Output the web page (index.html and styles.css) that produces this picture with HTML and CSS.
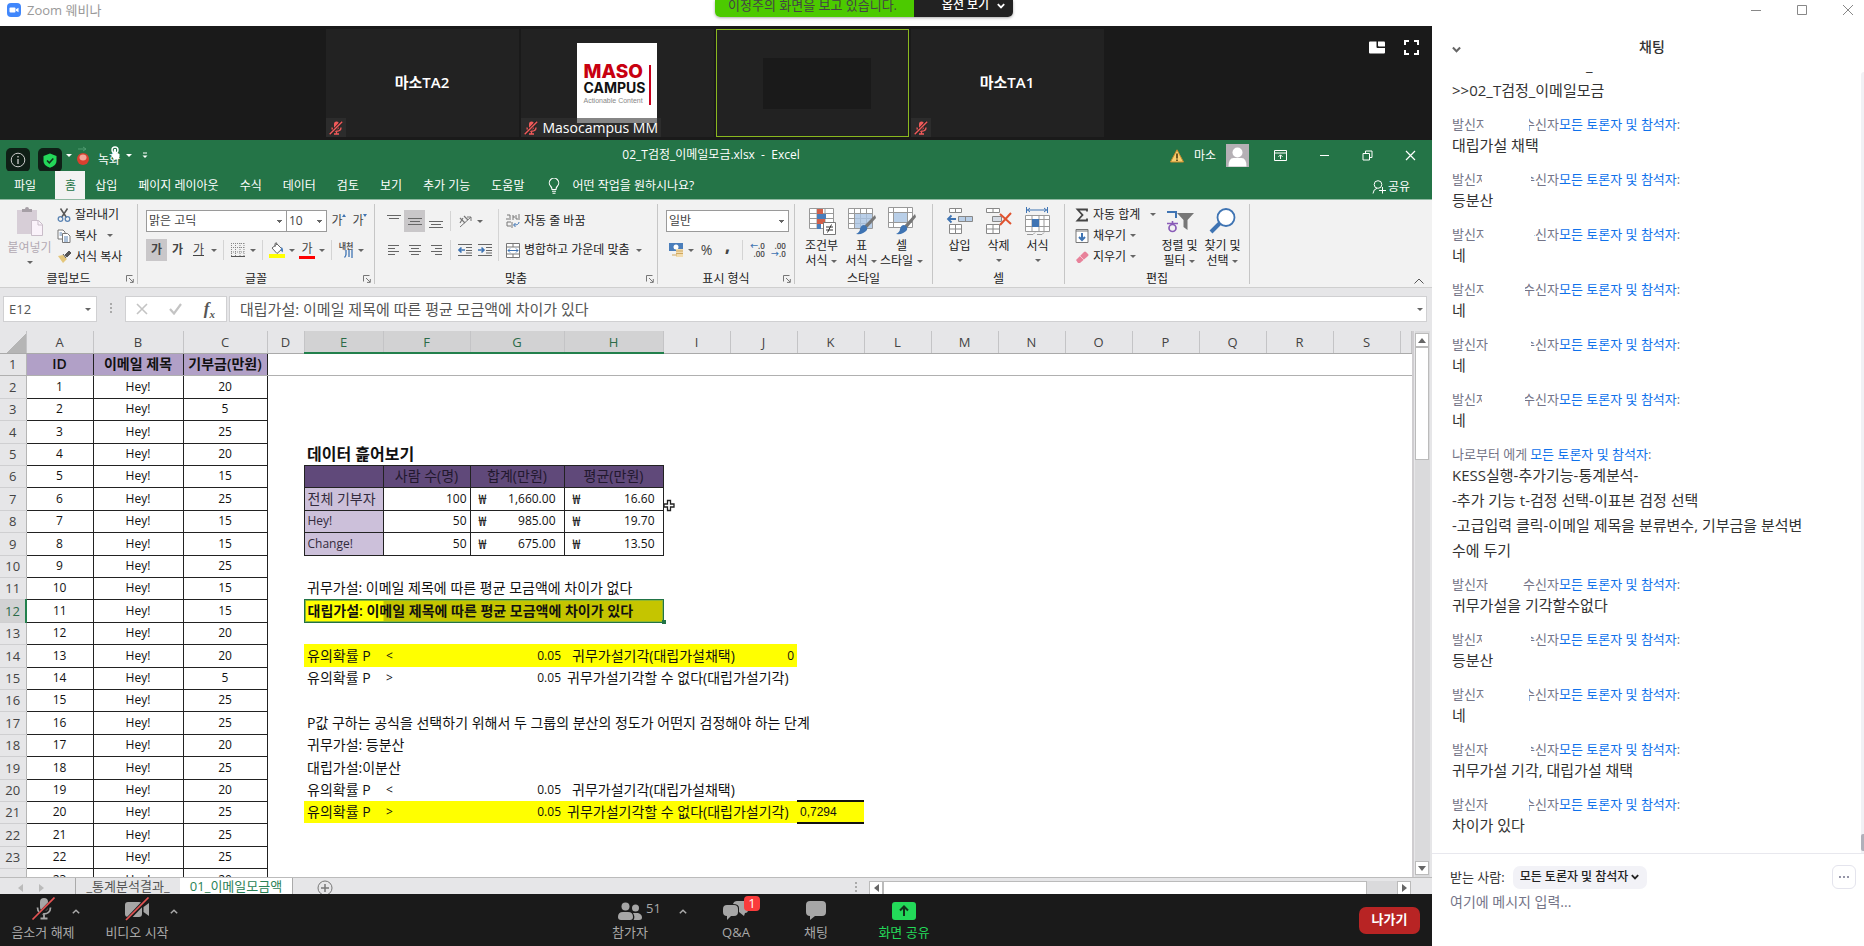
FILE: index.html
```html
<!DOCTYPE html>
<html lang="ko">
<head>
<meta charset="utf-8">
<title>Zoom 웨비나</title>
<link rel="stylesheet" href="styles.css">
</head>
<body>
<svg class="defs" aria-hidden="true">
  <symbol id="micoff" viewBox="0 0 14 14"><rect x="5" y="0.500" width="5" height="8" rx="2.500" fill="#f25a5a"/><path d="M3 6.500c0 5 9 5 9 0M7.500 10.500V13M5 13h5" stroke="#f25a5a" stroke-width="1.300" fill="none"/><path d="M1 13.500 13 .5" stroke="#222" stroke-width="3"/><path d="M.7 13.300 13.200.7" stroke="#f25a5a" stroke-width="1.400"/></symbol>
  <symbol id="launch" viewBox="0 0 8 8"><path d="M.5 6.500v-6h6M3 3l4 4M7.300 4v3.400H4" fill="none" stroke="#777"/></symbol>
  <symbol id="up" viewBox="0 0 8 5"><path d="M.8 4.200 4 1.200l3.200 3" fill="none" stroke="currentColor" stroke-width="1.500"/></symbol>
  <symbol id="down" viewBox="0 0 8 6"><path d="M.8 1.200 4 4.500l3.200-3.300" fill="none" stroke="currentColor" stroke-width="1.800"/></symbol>
</svg>

<header class="titlebar">
  <svg class="app" viewBox="0 0 14 14"><rect width="14" height="14" rx="4" fill="#4087fc"/><rect x="2.500" y="4.500" width="6" height="5" rx="1" fill="#fff"/><path d="m9 6.300 2.500-1.600v4.600L9 7.700z" fill="#fff"/></svg>
  <span class="app-name">Zoom 웨비나</span>
  <div class="banner"><span class="banner-msg">이정주의 화면을 보고 있습니다.</span><button class="banner-opt">옵션 보기 <svg width="8" height="6"><use href="#down"/></svg></button></div>
  <div class="win">
    <button aria-label="최소화"><svg width="12" height="12"><path d="M1 6.500h10" stroke="#888"/></svg></button>
    <button aria-label="최대화"><svg width="12" height="12"><path d="M1.500 1.500h9v9h-9z" stroke="#888" fill="none"/></svg></button>
    <button aria-label="닫기"><svg width="12" height="12"><path d="m1 1 10 10M11 1 1 11" stroke="#888"/></svg></button>
  </div>
</header>

<main class="main">
<section class="stage">
  <div class="gallery">
    <div class="tile"><b>마소TA2</b><span class="tag"><svg width="14" height="14"><use href="#micoff"/></svg></span></div>
    <div class="tile logo-tile">
      <div class="logo"><div class="logo-text"><b class="maso">MASO</b><b class="campus">CAMPUS</b><span class="action">Actionable Content</span></div></div>
      <span class="tag"><svg width="14" height="14"><use href="#micoff"/></svg>Masocampus MM</span>
    </div>
    <div class="tile speaking"><div class="mask"></div></div>
    <div class="tile"><b>마소TA1</b><span class="tag"><svg width="14" height="14"><use href="#micoff"/></svg></span></div>
    <div class="view-tools">
      <button aria-label="보기"><svg width="16" height="13"><path d="M0 1.500Q0 .5 1 .5h6.500V6q0 1 1 1H16v4.500q0 1-1 1H1q-1 0-1-1z" fill="#fff"/><path d="M9 .5h6q1 0 1 1v4H10q-1 0-1-1z" fill="#fff"/></svg></button>
      <button aria-label="전체 화면"><svg width="15" height="15"><path d="M1 5V1h4M10 1h4v4M14 10v4h-4M5 14H1v-4" fill="none" stroke="#fff" stroke-width="2"/></svg></button>
    </div>
  </div>

  <section class="excel">
    <div class="xl-title">
      <div class="qat">
        <button class="ov" aria-label="정보"><svg width="16" height="16"><circle cx="8" cy="8" r="6.800" fill="none" stroke="#ccc"/><path d="M8 7v5M8 4v1.500" stroke="#ccc" stroke-width="1.300"/></svg></button>
        <button class="ov" aria-label="보안"><svg width="14" height="15"><path d="M7 .5 13.500 3v5q0 4.500-6.500 6.800Q.5 12.500.5 8V3z" fill="#23d959"/><path d="m4 7.500 2.300 2.300L10.300 5.500" fill="none" stroke="#13301c" stroke-width="1.500"/></svg></button>
        <i class="caret light"></i>
        <svg class="ball" width="14" height="20"><path d="M2 3h8M7 1l3 2-3 2" stroke="#4f9a70" fill="none"/><circle cx="7" cy="13" r="6" fill="#d8402f"/><ellipse cx="7" cy="11.500" rx="3.500" ry="3" fill="#f3a79a"/></svg>
        <span class="rec">녹화<svg class="hand" width="10" height="14"><circle cx="5" cy="4" r="3" fill="none" stroke="#fff" stroke-width="1.400"/><path d="M4 3h2v4l3.500 1v3L8 13.500H4L1 9l2-.5z" fill="#fff"/></svg></span>
        <i class="caret light"></i>
        <svg class="custom" width="6" height="7"><path d="M1 1h4" stroke="#fff"/><path d="M.5 3.500h5L3 6z" fill="#fff"/></svg>
      </div>
      <h1>02_T검정_이메일모금.xlsx&nbsp; - &nbsp;Excel</h1>
      <div class="account">
        <svg width="14" height="14"><path d="M7 .8 13.500 13H.5z" fill="#f7cf6f" stroke="#c98b2c"/><path d="M7 4.500v5M7 10.500V12" stroke="#4b3a10" stroke-width="1.600"/></svg>
        <span class="user">마소</span>
        <svg class="avatar" width="23" height="23"><path fill="#b5b0b5" d="M0 0h23v23H0z"/><circle cx="11.500" cy="8.500" r="5" fill="#fff"/><path d="M2.500 22.500q0-8.500 5-8.500h8q5 0 5 8.500z" fill="#fff"/></svg>
        <button aria-label="리본 표시 옵션"><svg width="13" height="11"><path d="M.5.500h12v10H.5zM.5 3h12M6.500 9V5M4.500 6.800l2-2 2 2" fill="none" stroke="#fff"/></svg></button>
        <button aria-label="최소화"><svg width="11" height="11"><path d="M1 5.500h9" stroke="#fff"/></svg></button>
        <button aria-label="복원"><svg width="11" height="11"><path d="M1 3.500h6.500V10H1zM3.500 3V1H10v6.500H8" fill="none" stroke="#fff"/></svg></button>
        <button aria-label="닫기"><svg width="11" height="11"><path d="m1 1 9 9M10 1 1 10" stroke="#fff" stroke-width="1.200"/></svg></button>
      </div>
    </div>
    <nav class="tabs">
      <button class="file">파일</button><button class="on">홈</button><button>삽입</button><button>페이지 레이아웃</button><button>수식</button><button>데이터</button><button>검토</button><button>보기</button><button>추가 기능</button><button>도움말</button>
      <button class="tell"><svg width="12" height="16"><path d="M4 11.500Q4 9.500 2.500 8A4.700 4.700 0 1 1 9.500 8Q8 9.500 8 11.500zM4 13.300h4M4.500 15.300h3" fill="none" stroke="#fff" stroke-width="1.100"/></svg>어떤 작업을 원하시나요?</button>
      <button class="share"><svg width="14" height="14"><circle cx="6" cy="4.500" r="3.800" fill="none" stroke="#fff"/><path d="M1 13.500Q1.500 9 5 8.300M10.500 7v6.500M7 10.500h7" fill="none" stroke="#fff"/></svg>공유</button>
    </nav>

    <div class="ribbon">
      <div class="group g-clip">
        <div class="gbody">
          <button class="big off"><svg width="28" height="30"><path d="M1 3h20v24H1z" fill="#d7ced7"/><path d="M6 5V2h3q0-2 2-2t2 2h3v3z" fill="#a69fa6"/><path d="M15.500 13.500h7l4 4v11h-11z" fill="#faf2fa" stroke="#c9bdc9"/><path d="M22 13.500V18h4.500" fill="none" stroke="#c9bdc9"/></svg><span>붙여넣기</span><i class="caret"></i></button>
          <div class="stack">
            <button><svg width="14" height="14"><path d="m3.500.5 6 9M10.500.5l-6 9" stroke="#555" stroke-width="1.500"/><circle cx="3.500" cy="11" r="2.300" fill="none" stroke="#5a84b4" stroke-width="1.300"/><circle cx="10.500" cy="11" r="2.300" fill="none" stroke="#5a84b4" stroke-width="1.300"/></svg>잘라내기</button>
            <button><svg width="14" height="14"><path d="M1 1h5l2 2v7H1z" fill="#fff" stroke="#777"/><path d="M5.500 4.500h5l2.500 2.500v6.500H5.500z" fill="#fff" stroke="#777"/><path d="M7 8h4M7 10h4M7 12h4M2.500 4H5M2.500 6H5" stroke="#5a84b4"/></svg>복사<i class="caret"></i></button>
            <button><svg width="14" height="14"><path d="m1 6 5 7 4-4-4-4z" fill="#e4c67a"/><path d="m6 4 3 4M8 5l4-4 2 2-4 4z" stroke="#555" fill="#555"/></svg>서식 복사</button>
          </div>
        </div>
        <div class="glabel">클립보드<svg width="8" height="8"><use href="#launch"/></svg></div>
      </div>

      <div class="group g-font">
        <div class="gbody rows">
          <div class="row"><select class="combo name" aria-label="글꼴"><option>맑은 고딕</option></select><select class="combo size" aria-label="글꼴 크기"><option>10</option></select><button class="tool grow">가<svg width="4" height="3"><path d="M0 3h4L2 0z" fill="#3f74b3"/></svg></button><button class="tool shrink">가<svg width="4" height="3"><path d="M0 0h4L2 3z" fill="#3f74b3"/></svg></button></div>
          <div class="row"><button class="tool pressed"><b>가</b></button><button class="tool"><b><em>가</em></b></button><button class="tool"><u>가</u></button><i class="caret"></i><i class="sep"></i>
            <button class="ico"><svg width="14" height="14"><path d="M.5 0v13M4.500 0v13M9 0v13M13 0v13M0 .5h14M0 4.500h14M0 9h14" stroke="#888" stroke-dasharray="1 1"/><path d="M0 13.500h14" stroke="#555"/></svg></button><i class="caret"></i><i class="sep"></i>
            <button class="ico"><svg width="16" height="16"><path d="m3 6 5-4 5 5-5 4.500z" fill="#fff" stroke="#666"/><path d="M6 5V1.500q2-2 2 1" fill="none" stroke="#666"/><path d="M12.500 5q2.500 2 1 5.500L11.500 8z" fill="#4a7ebb"/><path d="M0 12h16v4H0z" fill="#ff0"/></svg></button><i class="caret"></i>
            <button class="ico"><span class="fc">가</span></button><i class="caret"></i><i class="sep"></i>
            <button class="ico"><span class="ruby">내천<svg width="9" height="8"><path d="M2 0v4Q2 6 .5 7.500M5 0v7M8 0v8" fill="none" stroke="#3f74b3" stroke-width="1.300"/></svg></span></button><i class="caret"></i></div>
        </div>
        <div class="glabel">글꼴<svg width="8" height="8"><use href="#launch"/></svg></div>
      </div>

      <div class="group g-align">
        <div class="gbody">
          <div class="rows">
            <div class="row"><button class="tool"><svg width="14" height="14"><path d="M0 1.500h14M2 4.500h10" stroke="#666"/></svg></button><button class="tool pressed"><svg width="14" height="14"><path d="M0 4.500h14M2 7.500h10M0 10.500h14" stroke="#666"/></svg></button><button class="tool"><svg width="14" height="14"><path d="M0 7.500h14M2 10.500h10M0 13.500h14" stroke="#666"/></svg></button><i class="sep"></i><button class="ico"><svg width="15" height="14"><path d="M2 13 13 3M13 3v4M13 3H9" stroke="#777" fill="none"/><path d="m2 4 5 5M2 9l3-5M6 2l4 4" stroke="#777" stroke-width="1.200"/></svg></button><i class="caret"></i></div>
            <div class="row"><button class="tool"><svg width="12" height="12"><path d="M0 1.500h11M0 4.500h7M0 7.500h11M0 10.500h7" stroke="#666"/></svg></button><button class="tool"><svg width="12" height="12"><path d="M0 1.500h12M2 4.500h8M0 7.500h12M2 10.500h8" stroke="#666"/></svg></button><button class="tool"><svg width="12" height="12"><path d="M1 1.500h11M5 4.500h7M1 7.500h11M5 10.500h7" stroke="#666"/></svg></button><i class="sep"></i><button class="ico"><svg width="14" height="12"><path d="M0 .5h14M8 3.500h6M8 6.500h6M0 11.500h14M8 9h6" stroke="#666"/><path d="M7 6H1M3.500 3.500 1 6l2.500 2.500" stroke="#3f74b3" stroke-width="1.600" fill="none"/></svg></button><button class="ico"><svg width="14" height="12"><path d="M0 .5h14M8 3.500h6M8 6.500h6M0 11.500h14M8 9h6" stroke="#666"/><path d="M0 6h6M3.500 3.500 6 6 3.500 8.500" stroke="#3f74b3" stroke-width="1.600" fill="none"/></svg></button></div>
          </div>
          <i class="vsep"></i>
          <div class="rows wide">
            <button class="line"><svg width="14" height="14"><path d="M1 1h3v3M0 5h5M7 1v5M7 3h2M10 1v4h2M13 0v6M1 8h4M1 8v4h4M6 8v6" fill="none" stroke="#777"/><path d="M13 8q0 3-5 3M9.500 9 7.500 11l2 2" fill="none" stroke="#3f74b3"/></svg>자동 줄 바꿈</button>
            <button class="line"><svg width="14" height="15"><path d="M.5.500h13v14H.5zM.5 4h13M.5 11h13M7 .5V4M7 11v3.500" fill="#fff" stroke="#777"/><path d="M2 7.500h10M4 5.500l-2 2 2 2M10 5.500l2 2-2 2" fill="none" stroke="#3f74b3"/></svg>병합하고 가운데 맞춤<i class="caret"></i></button>
          </div>
        </div>
        <div class="glabel">맞춤<svg width="8" height="8"><use href="#launch"/></svg></div>
      </div>

      <div class="group g-num">
        <div class="gbody rows">
          <div class="row"><select class="combo fmt" aria-label="표시 형식"><option>일반</option></select></div>
          <div class="row"><button class="ico"><svg width="16" height="16"><path d="M1 1h14v8H1z" fill="#4a7ebb"/><circle cx="8" cy="5" r="2.500" fill="#fff"/><path d="M8 7h7v8H8z" fill="#f2dcae"/><path d="M8 9h7M8 11.500h7M4 13h5" stroke="#d0a860"/></svg></button><i class="caret"></i><button class="tool pct">%</button><button class="tool comma">,</button><i class="sep"></i><button class="tool dec"><span><em>←</em>.0<br>.00</span></button><button class="tool dec"><span>.00<br><em>→</em>.0</span></button></div>
        </div>
        <div class="glabel">표시 형식<svg width="8" height="8"><use href="#launch"/></svg></div>
      </div>

      <div class="group g-style">
        <div class="gbody bigs">
          <button class="big"><svg width="28" height="28"><path d="M1.500 1.500h24v20h-24zM1.500 6.500h24M1.500 11.500h24M1.500 16.500h24M9 1.500v20M17 1.500v20" fill="#fff" stroke="#999"/><path d="M9 2h6v5H9zM9 12h8v5H9z" fill="#d2604a"/><path d="M9 7h9v5H9zM9 17h4v5H9z" fill="#4a7ebb"/><path d="M15.500 15.500h12v12h-12z" fill="#fff" stroke="#777"/><path d="M18 20h7M18 23h7M23.500 17.500l-4 8" stroke="#333"/></svg><span>조건부<br>서식 <i class="caret in"></i></span></button>
          <button class="big"><svg width="28" height="28"><path d="M.5 1.500h24v20H.5zM.5 6.500h24M.5 11.500h24M.5 16.500h24M6.500 1.500v20M12.500 1.500v20M18.500 1.500v20" fill="#fff" stroke="#999"/><path d="M7 7h17v14H7z" fill="#a9c3e2" opacity=".8"/><path d="m27 8 1 3-9 10-3-2z" fill="#777"/><path d="M16 18q4 1 3 5-4 5-11 4 4-2 4-5 1-4 4-4z" fill="#3f74b3"/></svg><span>표<br>서식 <i class="caret in"></i></span></button>
          <button class="big"><svg width="28" height="28"><path d="M.5.500h24v20H.5zM.5 5.500h24M.5 15.500h24M5.500.5v20M19.500.5v20" fill="#fff" stroke="#999"/><path d="M6 6h13v9H6z" fill="#b9cfe8"/><path d="m27 7 1 3-9 11-3-2z" fill="#777"/><path d="M16 18q4 1 3 5-4 5-11 4 4-2 4-5 1-4 4-4z" fill="#3f74b3"/></svg><span>셀<br>스타일 <i class="caret in"></i></span></button>
        </div>
        <div class="glabel">스타일</div>
      </div>

      <div class="group g-cell">
        <div class="gbody bigs">
          <button class="big"><svg width="28" height="28"><path d="M3.500 1.500h12v4h-12zM9.500 1.500v4M3.500 17.500h12v9h-12zM9.500 17.500v9M3.500 22h12" fill="#fff" stroke="#888"/><path d="M12.500 9.500h14v5h-14zM19.500 9.500v5" fill="#b9cfe8" stroke="#888"/><path d="M10 12H2M5.500 8.500 2 12l3.500 3.500" fill="none" stroke="#3f74b3" stroke-width="1.800"/></svg><span>삽입</span><i class="caret"></i></button>
          <button class="big"><svg width="28" height="28"><path d="M1.500 1.500h13v4h-13zM8 1.500v4M1.500 17.500h13v9h-13zM8 17.500v9M1.500 22h13" fill="#fff" stroke="#888"/><path d="M7.500 9.500h9v5h-9z" fill="#d5dbe4" stroke="#888"/><path d="m15 7 11 10M26 6 15 18" stroke="#e0532f" stroke-width="2"/></svg><span>삭제</span><i class="caret"></i></button>
          <button class="big"><svg width="28" height="28"><path d="M1.500 8.500h24v16h-24zM1.500 12.500h24M1.500 19.500h24M8 8.500v16M15 8.500v16M20 8.500v16M3 27.500h6l2-2M13 27.500h5l2-2" fill="#fff" stroke="#999"/><path d="M8 12h7v8H8z" fill="#3f74b3"/><path d="M3 3h20M6 1 3.500 3 6 5M20 1l2.500 2L20 5M2.500 0v6M23.500 0v6" fill="none" stroke="#3f74b3"/></svg><span>서식</span><i class="caret"></i></button>
        </div>
        <div class="glabel">셀</div>
      </div>

      <div class="group g-edit">
        <div class="gbody">
          <div class="stack">
            <button><svg width="14" height="14"><path d="M12 3.500V1.500H2.500L7.500 7l-5 5.500H12v-2" fill="none" stroke="#444" stroke-width="1.800"/></svg>자동 합계<i class="caret"></i></button>
            <button><svg width="14" height="14"><path d="M1 .5h12v13H1z" fill="#fff" stroke="#777"/><path d="M1 2h12" stroke="#777"/><path d="M7 4v7M4 8l3 3 3-3" fill="none" stroke="#3f74b3" stroke-width="2"/></svg>채우기<i class="caret near"></i></button>
            <button><svg width="14" height="14"><path d="m1 10 8-8q1-1 2 0l2 2q1 1 0 2l-8 7H3z" fill="#e8829a"/><path d="m5 6 4 4" stroke="#f6c3cf"/></svg>지우기<i class="caret near"></i></button>
          </div>
          <button class="big"><svg width="28" height="28"><path d="M1 5h9v6" fill="none" stroke="#3f74b3" stroke-width="2"/><path d="M1 16.500h11M6.500 14v2" stroke="#8a5cb8" stroke-width="1.600"/><circle cx="6.500" cy="21" r="3.500" fill="none" stroke="#8a5cb8" stroke-width="1.700"/><path d="M11 6h17l-6.500 7v10l-4-3v-7z" fill="#777"/></svg><span>정렬 및<br>필터 <i class="caret in"></i></span></button>
          <button class="big"><svg width="28" height="28"><circle cx="17" cy="10.500" r="8.500" fill="#fff" stroke="#3f74b3" stroke-width="1.800"/><path d="m11 16-9 9" stroke="#3f74b3" stroke-width="4"/></svg><span>찾기 및<br>선택 <i class="caret in"></i></span></button>
        </div>
        <div class="glabel">편집</div>
      </div>
      <button class="collapse" aria-label="리본 축소"><svg width="10" height="6"><path d="m.5 5.500 4.500-4.500 4.500 4.500" fill="none" stroke="#555"/></svg></button>
    </div>

    <div class="fbar">
      <label class="namebox"><input value="E12" aria-label="이름 상자"><i class="caret"></i></label>
      <i class="dots"></i>
      <div class="fbtns"><button aria-label="취소"><svg width="12" height="12"><path d="m1 1 10 10M11 1 1 11" stroke="#c4c4c4" stroke-width="1.600"/></svg></button><button aria-label="입력"><svg width="13" height="12"><path d="m1 6 4 4.500L12 1" fill="none" stroke="#c4c4c4" stroke-width="2.200"/></svg></button><button class="fx">f<sub>x</sub></button></div>
      <label class="formula"><input value="대립가설: 이메일 제목에 따른 평균 모금액에 차이가 있다" aria-label="수식"><i class="caret"></i></label>
    </div>

    <div class="grid-area">
      <div class="pane">
        <table class="sheet">
          <colgroup><col class="w26"><col class="w67"><col class="w90"><col class="w84"><col class="w37"><col class="w79"><col class="w87"><col class="w94"><col class="w99"><col span="11" class="w67"><col></colgroup>
          <thead><tr><th class="corner"></th><th>A</th><th>B</th><th>C</th><th>D</th><th class="sel">E</th><th class="sel">F</th><th class="sel">G</th><th class="sel">H</th><th>I</th><th>J</th><th>K</th><th>L</th><th>M</th><th>N</th><th>O</th><th>P</th><th>Q</th><th>R</th><th>S</th><th></th></tr></thead>
          <tbody>
            <tr class="frozen"><th>1</th><td class="h">ID</td><td class="h">이메일 제목</td><td class="h">기부금(만원)</td><td colspan="17"></td></tr>
            <tr><th>2</th><td class="d">1</td><td class="d">Hey!</td><td class="d">20</td><td colspan="17"></td></tr>
            <tr><th>3</th><td class="d">2</td><td class="d">Hey!</td><td class="d">5</td><td colspan="17"></td></tr>
            <tr><th>4</th><td class="d">3</td><td class="d">Hey!</td><td class="d">25</td><td colspan="17"></td></tr>
            <tr><th>5</th><td class="d">4</td><td class="d">Hey!</td><td class="d">20</td><td></td><td colspan="16" class="title">데이터 흝어보기</td></tr>
            <tr><th>6</th><td class="d">5</td><td class="d">Hey!</td><td class="d">15</td><td></td><td class="p"></td><td class="p">사람 수(명)</td><td class="p">합계(만원)</td><td class="p">평균(만원)</td><td colspan="12"></td></tr>
            <tr><th>7</th><td class="d">6</td><td class="d">Hey!</td><td class="d">25</td><td></td><td class="l">전체 기부자</td><td class="n">100</td><td class="m"><span class="won"><i>₩</i>1,660.00</span></td><td class="m"><span class="won"><i>₩</i>16.60</span><svg class="cross" width="12" height="13"><path d="M4.500 1.500h3v3.500h3.500v3H7.500v3.500h-3V8H1V5h3.500z" fill="#fff" stroke="#222" stroke-width="1.300"/></svg></td><td colspan="12"></td></tr>
            <tr><th>8</th><td class="d">7</td><td class="d">Hey!</td><td class="d">15</td><td></td><td class="l en">Hey!</td><td class="n">50</td><td class="m"><span class="won"><i>₩</i>985.00</span></td><td class="m"><span class="won"><i>₩</i>19.70</span></td><td colspan="12"></td></tr>
            <tr><th>9</th><td class="d">8</td><td class="d">Hey!</td><td class="d">15</td><td></td><td class="l en">Change!</td><td class="n">50</td><td class="m"><span class="won"><i>₩</i>675.00</span></td><td class="m"><span class="won"><i>₩</i>13.50</span></td><td colspan="12"></td></tr>
            <tr><th>10</th><td class="d">9</td><td class="d">Hey!</td><td class="d">25</td><td colspan="17"></td></tr>
            <tr><th>11</th><td class="d">10</td><td class="d">Hey!</td><td class="d">15</td><td></td><td colspan="16">귀무가설: 이메일 제목에 따른 평균 모금액에 차이가 없다</td></tr>
            <tr><th class="sel">12</th><td class="d">11</td><td class="d">Hey!</td><td class="d">15</td><td></td><td colspan="4" class="picked">대립가설: 이메일 제목에 따른 평균 모금액에 차이가 있다</td><td colspan="12"></td></tr>
            <tr><th>13</th><td class="d">12</td><td class="d">Hey!</td><td class="d">20</td><td colspan="17"></td></tr>
            <tr><th>14</th><td class="d">13</td><td class="d">Hey!</td><td class="d">20</td><td></td><td class="y">유의확률 P</td><td class="y en">&lt;</td><td class="y r">0.05</td><td colspan="3" class="y in"><span class="split">귀무가설기각(대립가설채택)<span>0</span></span></td><td colspan="10"></td></tr>
            <tr><th>15</th><td class="d">14</td><td class="d">Hey!</td><td class="d">5</td><td></td><td>유의확률 P</td><td class="en">&gt;</td><td class="r">0.05</td><td colspan="13">귀무가설기각할 수 없다(대립가설기각)</td></tr>
            <tr><th>16</th><td class="d">15</td><td class="d">Hey!</td><td class="d">25</td><td colspan="17"></td></tr>
            <tr><th>17</th><td class="d">16</td><td class="d">Hey!</td><td class="d">25</td><td></td><td colspan="16">P값 구하는 공식을 선택하기 위해서 두 그룹의 분산의 정도가 어떤지 검정해야 하는 단계</td></tr>
            <tr><th>18</th><td class="d">17</td><td class="d">Hey!</td><td class="d">20</td><td></td><td colspan="16">귀무가설: 등분산</td></tr>
            <tr><th>19</th><td class="d">18</td><td class="d">Hey!</td><td class="d">25</td><td></td><td colspan="16">대립가설:이분산</td></tr>
            <tr><th>20</th><td class="d">19</td><td class="d">Hey!</td><td class="d">20</td><td></td><td>유의확률 P</td><td class="en">&lt;</td><td class="r">0.05</td><td colspan="13" class="in">귀무가설기각(대립가설채택)</td></tr>
            <tr><th>21</th><td class="d">20</td><td class="d">Hey!</td><td class="d">25</td><td></td><td class="y">유의확률 P</td><td class="y en">&gt;</td><td class="y r">0.05</td><td colspan="3" class="y">귀무가설기각할 수 없다(대립가설기각)</td><td class="y result">0,7294</td><td colspan="9"></td></tr>
            <tr><th>22</th><td class="d">21</td><td class="d">Hey!</td><td class="d">25</td><td colspan="17"></td></tr>
            <tr><th>23</th><td class="d">22</td><td class="d">Hey!</td><td class="d">25</td><td colspan="17"></td></tr>
            <tr><th></th><td class="d">23</td><td class="d">Hey!</td><td class="d">20</td><td colspan="17"></td></tr>
          </tbody>
        </table>
      </div>
      <div class="vscroll"><i class="arrow"><svg width="8" height="5"><path d="M0 5h8L4 0z" fill="#666"/></svg></i><i class="vthumb"></i><i class="arrow end"><svg width="8" height="5"><path d="M0 0h8L4 5z" fill="#666"/></svg></i></div>
    </div>
    <div class="sheetbar">
      <span class="navs"><svg width="26" height="8"><path d="M5 0v8L0 4zM21 0v8l5-4z" fill="#bbb"/></svg></span>
      <button class="stab">_통계분석결과_</button><button class="stab on">01_이메일모금액</button>
      <button class="add" aria-label="새 시트"><svg width="16" height="16"><circle cx="8" cy="8" r="7" fill="none" stroke="#777"/><path d="M8 4v8M4 8h8" stroke="#777" stroke-width="1.500"/></svg></button>
      <i class="dots"></i>
      <div class="hscroll"><i class="arrow"><svg width="5" height="8"><path d="M5 0v8L0 4z" fill="#666"/></svg></i><i class="hthumb"></i><i class="arrow end"><svg width="5" height="8"><path d="M0 0v8l5-4z" fill="#666"/></svg></i></div>
    </div>
  </section>

  <footer class="toolbar">
    <button class="tb mic"><svg width="24" height="24"><rect x="9" y="1" width="8" height="13" rx="4" fill="#a6a6a6"/><path d="M6.500 10.500c0 8.500 13 8.500 13 0M13 17v4M9.500 21.500h7" fill="none" stroke="#a6a6a6" stroke-width="1.800"/><path d="m3 23 21-22" stroke="#1a1a1a" stroke-width="4"/><path d="M1.500 22.500 23.500.5" stroke="#e55353" stroke-width="1.700"/></svg><span>음소거 해제</span></button>
    <button class="more" aria-label="오디오 옵션"><svg width="8" height="5"><use href="#up"/></svg></button>
    <button class="tb vid"><svg width="26" height="24"><rect x="1" y="5" width="17" height="15" rx="3" fill="#a6a6a6"/><path d="m19.500 10 5.500-4v13l-5.500-4z" fill="#a6a6a6"/><path d="m3 23 21-22" stroke="#1a1a1a" stroke-width="4"/><path d="M2 23 24.500.5" stroke="#e55353" stroke-width="1.700"/></svg><span>비디오 시작</span></button>
    <button class="more" aria-label="비디오 옵션"><svg width="8" height="5"><use href="#up"/></svg></button>
    <div class="mid">
      <button class="tb people"><svg width="24" height="18"><circle cx="7.500" cy="4.500" r="4" fill="#a6a6a6"/><path d="M0 15q0-5 5-5h5q5 0 5 5 0 3-3 3H3q-3 0-3-3z" fill="#a6a6a6"/><circle cx="17.500" cy="6" r="3.500" fill="#a6a6a6"/><path d="M15 11h5q4 1 4 4.500 0 2.500-3 2.500h-5.500q2-3-.5-7z" fill="#a6a6a6"/></svg><em class="count">51</em><span>참가자</span></button>
      <button class="more" aria-label="참가자 옵션"><svg width="8" height="5"><use href="#up"/></svg></button>
      <button class="tb qa"><svg width="26" height="19"><path d="M10 3q1-3 4-3h7q4 0 4 4v5q0 3-3 3l-1 3-5-4V7q0-4-6-4z" fill="#a6a6a6"/><path d="M4 4h7q4 0 4 4v3q0 4-4 4H8l-4 4v-4q-4 0-4-4V8q0-4 4-4z" fill="#a6a6a6"/></svg><em class="badge">1</em><span>Q&amp;A</span></button>
      <button class="tb talk"><svg width="20" height="19"><path d="M4 0h12q4 0 4 4v7q0 4-4 4H9l-5 4v-4q-4 0-4-4V4q0-4 4-4z" fill="#a6a6a6"/></svg><span>채팅</span></button>
      <button class="tb present"><svg width="24" height="18"><rect width="24" height="18" rx="3" fill="#23d959"/><path d="M12 14V5M8 8.500 12 4.500l4 4" fill="none" stroke="#12301b" stroke-width="2"/></svg><span>화면 공유</span></button>
    </div>
    <button class="leave">나가기</button>
  </footer>
</section>

<aside class="chat">
  <header class="chat-head"><button aria-label="접기"><svg width="9" height="7" viewBox="0 0 8 6"><use href="#down"/></svg></button><h2>채팅</h2></header>
  <div class="log">
    <p class="carry">_</p>
    <div class="msg"><p>&gt;&gt;02_T검정_이메일모금</p></div>
    <div class="msg"><div class="meta"><span class="who"><span class="a32">발신자</span><span class="b30">수신자</span></span><a href="#">모든 토론자 및 참석자</a>:</div><p>대립가설 채택</p></div>
    <div class="msg"><div class="meta"><span class="who"><span class="a30">발신자</span><span class="b28">수신자</span></span><a href="#">모든 토론자 및 참석자</a>:</div><p>등분산</p></div>
    <div class="msg"><div class="meta"><span class="who"><span class="a32">발신자</span><span class="b25">수신자</span></span><a href="#">모든 토론자 및 참석자</a>:</div><p>네</p></div>
    <div class="msg"><div class="meta"><span class="who"><span class="a32">발신자</span><span class="b34">수신자</span></span><a href="#">모든 토론자 및 참석자</a>:</div><p>네</p></div>
    <div class="msg"><div class="meta"><span class="who"><span class="a36">발신자</span><span class="b28">수신자</span></span><a href="#">모든 토론자 및 참석자</a>:</div><p>네</p></div>
    <div class="msg"><div class="meta"><span class="who"><span class="a30">발신자</span><span class="b34">수신자</span></span><a href="#">모든 토론자 및 참석자</a>:</div><p>네</p></div>
    <div class="msg"><div class="meta"><span class="from">나로부터 에게</span><a href="#">모든 토론자 및 참석자</a>:</div><p>KESS실행-추가기능-통계분석-</p><p>-추가 기능 t-검정 선택-이표본 검정 선택</p><p>-고급입력 클릭-이메일 제목을 분류변수, 기부금을 분석변<br>수에 두기</p></div>
    <div class="msg"><div class="meta"><span class="who"><span class="a36">발신자</span><span class="b36">수신자</span></span><a href="#">모든 토론자 및 참석자</a>:</div><p>귀무가설을 기각할수없다</p></div>
    <div class="msg"><div class="meta"><span class="who"><span class="a30">발신자</span><span class="b28">수신자</span></span><a href="#">모든 토론자 및 참석자</a>:</div><p>등분산</p></div>
    <div class="msg"><div class="meta"><span class="who"><span class="a32">발신자</span><span class="b30">수신자</span></span><a href="#">모든 토론자 및 참석자</a>:</div><p>네</p></div>
    <div class="msg"><div class="meta"><span class="who"><span class="a36">발신자</span><span class="b28">수신자</span></span><a href="#">모든 토론자 및 참석자</a>:</div><p>귀무가설 기각, 대립가설 채택</p></div>
    <div class="msg"><div class="meta"><span class="who"><span class="a36">발신자</span><span class="b30">수신자</span></span><a href="#">모든 토론자 및 참석자</a>:</div><p>차이가 있다</p></div>
    <i class="track"><i></i></i>
  </div>
  <div class="composer">
    <div class="to"><label for="to">받는 사람:</label><span class="pill"><select id="to"><option>모든 토론자 및 참석자</option></select><svg width="8" height="6"><use href="#down"/></svg></span><button class="dots3" aria-label="더 보기"><svg width="10" height="2"><path d="M0 0h2v2H0zM4 0h2v2H4zM8 0h2v2H8z" fill="#9696a8"/></svg></button></div>
    <textarea placeholder="여기에 메시지 입력..." aria-label="메시지"></textarea>
  </div>
</aside>
</main>
</body>
</html>
```
FILE: styles.css
```css
* { box-sizing: border-box; }
body {
  margin: 0;
  height: 100vh;
  display: flex;
  flex-direction: column;
  overflow: hidden;
  background: #fff;
  color: #222;
  font: 12px/16px "Open Sans", "Noto Sans CJK KR", sans-serif;
}
button, input, select, textarea { font: inherit; color: inherit; background: none; border: 0; padding: 0; margin: 0; outline: 0; }
select { appearance: none; }
i, em { font-style: normal; }
svg { flex: none; display: block; }
h1, h2, p { margin: 0; font-weight: 400; }
.defs { position: absolute; width: 0; height: 0; }

/* window title */
.titlebar { position: relative; height: 26px; flex: none; display: flex; align-items: flex-start; padding: 3px 8px 0 7px; }
.app { width: 14px; height: 14px; }
.app-name { margin-left: 6px; font-size: 13px; line-height: 14px; color: #999; }
.banner { position: absolute; top: 0; left: calc(50% - 217px); height: 17px; display: flex; border-radius: 0 0 5px 5px; overflow: hidden; box-shadow: 0 1px 3px #0005; line-height: 10px; }
.banner-msg { background: #4cca00; color: #444; font-size: 13px; padding: 0 13px; width: 199px; white-space: nowrap; }
.banner-opt { background: #222; color: #fff; width: 99px; display: flex; align-items: flex-start; justify-content: center; gap: 8px; padding-left: 20px; line-height: 10px; font-weight: 500; }
.banner-opt svg { margin-top: 3px; }
.win { margin-left: auto; display: flex; gap: 34px; padding: 1px 2px 0 0; }

.main { flex: 1; min-height: 0; display: flex; }
.stage { flex: 1; min-width: 0; display: flex; flex-direction: column; }

/* participants */
.gallery { position: relative; height: 114px; flex: none; display: flex; justify-content: center; gap: 2px; padding: 3px 3px 3px 0; background: #1a1a1a; color: #fff; }
.tile { position: relative; width: 193px; background: #222; display: flex; align-items: center; justify-content: center; font-size: 15px; padding-bottom: 2px; }
.logo-tile { padding-bottom: 0; }
.tile b { font-weight: 600; }
.speaking { border: 1px solid #8ab81f; padding: 0; }
.mask { width: 108px; height: 51px; background: #1a1a1a; margin-left: 10px; }
.tag { position: absolute; left: 0; bottom: 0; height: 19px; padding: 0 3px; display: flex; align-items: center; gap: 5px; background: #3339; font-size: 14px; }
.logo { width: 80px; height: 80px; background: #fff; display: flex; justify-content: center; align-items: center; padding-top: 3px; }
.logo-text { border-right: 2px solid #c8001c; height: 40px; width: 67px; display: flex; flex-direction: column; font-family: Inter, sans-serif; }
.logo .maso { font-size: 19px; line-height: 14px; font-weight: 800; color: #c80010; }
.logo .campus { font-size: 14px; line-height: 18px; font-weight: 700; color: #111; }
.logo .action { font: 7px/8px "Liberation Sans", sans-serif; color: #888; white-space: nowrap; }
.view-tools { position: absolute; right: 13px; top: 14px; display: flex; gap: 19px; align-items: center; }

/* Excel title and tabs */
.excel { flex: 1; min-height: 0; display: flex; flex-direction: column; background: #e6e6e8; }
.xl-title { height: 31px; flex: none; background: #247447; color: #fff; display: grid; grid-template-columns: 1fr auto 1fr; align-items: center; padding: 0 16px 0 6px; }
.xl-title h1 { font-size: 12px; line-height: 18px; padding-bottom: 2px; }
.qat { display: flex; align-items: center; gap: 8px; height: 31px; }
.ov { width: 24px; height: 24px; background: #0f1f16; border-radius: 5px; display: flex; align-items: center; justify-content: center; margin-top: 9px; }
.qat > .caret { margin: 0 -6px; }
.rec { position: relative; margin: 9px 2px 0 0; }
.hand { position: absolute; right: 0; top: -6px; }
.custom { margin-left: 6px; }
.account { display: flex; align-items: center; justify-content: flex-end; }
.account .user { margin: 0 10px; }
.account button { margin-left: 32px; }
.account .avatar + button { margin-left: 25px; }
.tabs { height: 29px; flex: none; display: flex; background: #247447; color: #fff; border-bottom: 1px solid #8fb9a1; }
.tabs button { padding: 2px 11px 0 10px; white-space: nowrap; }
.tabs .file { padding: 2px 19px 0 14px; }
.tabs .on { background: #f2f2f2; color: #247447; padding: 2px 9px 0 10px; }
.tabs .tell { display: flex; align-items: center; gap: 12px; padding-left: 13px; }
.tabs .share { display: flex; align-items: center; gap: 2px; margin-left: auto; padding: 4px 22px 0 0; }

/* ribbon */
.ribbon { position: relative; height: 88px; flex: none; display: flex; padding: 4px 0 3px; background: #f2f2f2; border-bottom: 1px solid #cfcfcf; }
.group { border-right: 1px solid #c6c6c6; display: flex; flex-direction: column; }
.gbody { flex: none; height: 66px; display: flex; white-space: nowrap; }
.glabel { height: 16px; line-height: 18px; position: relative; text-align: center; }
.glabel svg { position: absolute; right: 3px; top: 5px; }
.g-clip { width: 138px; }
.g-font { width: 237px; }
.g-align { width: 283px; }
.g-num { width: 137px; }
.g-style { width: 138px; }
.g-cell { width: 132px; }
.g-edit { width: 185px; }
.caret { flex: none; width: 10px; height: 16px; display: inline-flex; align-items: center; justify-content: center; }
.caret::before { content: ""; border: 3px solid transparent; border-top-color: #666; border-bottom: 0; }
.caret.light::before { border-top-color: #fff; }
.caret.in { height: 10px; width: 7px; vertical-align: middle; }
.rows { display: flex; flex-direction: column; gap: 7px; padding: 6px 0 0 8px; }
.row { display: flex; align-items: center; height: 22px; }
.tool, .ico { height: 22px; width: 21px; display: flex; align-items: center; justify-content: center; color: #444; }
.ico { width: 20px; }
.pressed { background: #c9c7c9; }
.sep { width: 1px; height: 20px; margin: 0 4px; background: #d4d4d4; }
.combo {
  height: 22px;
  border: 1px solid #9a9a9a;
  padding: 0 2px;
  color: #444;
  background-color: #fff;
  background-image: linear-gradient(#666, #666), linear-gradient(#666, #666), linear-gradient(#666, #666);
  background-size: 5px 1px, 3px 1px, 1px 1px;
  background-position: right 4px top 9px, right 5px top 10px, right 6px top 11px;
  background-repeat: no-repeat;
}
.combo.name { width: 141px; }
.combo.size { width: 41px; margin-left: -1px; }
.combo.fmt { width: 123px; }
.grow { margin-left: 1px; }
.tool:has(svg) { gap: 0; }
.grow svg, .shrink svg { align-self: flex-start; margin: 4px 0 0 -1px; }
.fc { border-bottom: 3px solid #f00; line-height: 14px; padding: 0 2px; }
.ruby { font-size: 8px; line-height: 8px; font-weight: 600; color: #555; }
.ruby svg { margin-left: 5px; }
.pct { font-size: 14px; }
.comma { font-size: 16px; font-weight: 800; padding-bottom: 8px; }
.dec { font-size: 8px; line-height: 8px; text-align: right; font-weight: 600; }
.dec em { color: #3f74b3; }
.g-align .rows { width: 123px; }
.vsep { width: 1px; height: 52px; margin-top: 5px; background: #d4d4d4; }
.g-align .wide { width: auto; padding-left: 7px; }
.line, .stack button { display: flex; align-items: center; gap: 4px; height: 22px; }
.stack button { height: 21px; }
.stack button .caret { margin-left: 4px; }
.stack button .near { margin-left: -2px; }
.stack { padding-left: 5px; }
.big { display: flex; flex-direction: column; align-items: center; padding-top: 3px; line-height: 15px; }
.big > svg { margin-bottom: 3px; }
.big > .caret { height: 14px; }
.g-clip .big { width: 52px; padding-left: 7px; }
.off { color: #b3a9b3; }
.bigs { justify-content: center; }
.g-style .big { width: 41px; margin: 0 0 0 -1px; }
.g-style .bigs { justify-content: flex-start; padding-left: 7px; }
.g-cell .big { width: 39px; }
.g-edit .stack { padding-left: 10px; width: 93px; }
.g-edit .big { width: 43px; }
.collapse { position: absolute; right: 8px; bottom: 3px; }

/* formula bar */
.fbar { height: 43px; flex: none; display: flex; align-items: center; padding: 0 5px 1px 3px; }
.namebox, .fbtns, .formula { height: 26px; background: #fff; border: 1px solid #d0d0d2; display: flex; align-items: center; color: #555; }
.namebox { width: 94px; padding: 0 3px 0 5px; }
.namebox input { width: 74px; font-size: 13px; }
.dots { width: 2px; height: 12px; background: repeating-linear-gradient(#aaa 0 2px, transparent 2px 4px); }
.fbar .dots { margin: 0 13px; }
.fbtns { width: 102px; justify-content: space-between; padding: 0 11px 0 10px; }
.fx { font: italic 600 17px/18px "Liberation Serif", serif; }
.fx sub { font-size: 11px; line-height: 0; }
.formula { flex: 1; margin-left: 2px; padding: 0 1px 0 10px; }
.formula input { flex: 1; font-size: 15px; }

/* worksheet */
.grid-area { flex: 1; min-height: 0; display: flex; }
.pane { flex: 1; overflow: hidden; background: #fff; border-right: 2px solid #cfcdd0; }
.sheet { width: 100%; table-layout: fixed; border-collapse: collapse; font-size: 14px; line-height: 18px; color: #111; }
.w26 { width: 26px; } .w37 { width: 37px; } .w67 { width: 67px; } .w79 { width: 79px; } .w84 { width: 84px; }
.w87 { width: 87px; } .w90 { width: 90px; } .w94 { width: 94px; } .w99 { width: 99px; }
.sheet th { background: #e6e6e8; color: #444; font-weight: 400; font-size: 13px; padding: 0; border-right: 1px solid #b5b5b5; }
.sheet thead th { height: 22px; border-bottom: 1px solid #aaa; border-right-color: #c4c4c6; }
.sheet thead .sel { background: #d2d2d3; color: #2b6b48; border-bottom: 2px solid #22804c; }
.sheet tbody .sel { background: #d2d2d3; color: #2b6b48; border-right: 2px solid #22804c; }
.sheet tbody th { border-bottom: 1px solid #cfcfd1; }
.sheet thead .corner { background: linear-gradient(135deg, transparent 60%, #b5b5b5 60%) #e6e6e8; }
.sheet td { padding: 0 3px; white-space: nowrap; position: relative; }
.sheet tbody tr { height: 22px; }
.sheet tbody tr:nth-child(5n+2), .sheet tbody tr:nth-child(5n+4) { height: 23px; }
.sheet .frozen td, .sheet .frozen th { border-bottom: 1px solid #b0b0b0; }
.sheet .d, .sheet .h, .sheet .p, .sheet .l, .sheet .n, .sheet .m { border: 1px solid #222; text-align: center; padding: 0 1px; }
.sheet .d, .sheet .n, .sheet .m, .sheet .en, .sheet .r { font-size: 12px; }
.sheet .h { background: #b1a0c7; font-weight: 600; font-size: 14px; }
.sheet .title { font-weight: 600; font-size: 16px; }
.sheet .p { background: #60497a; color: #22182e; }
.sheet .l { background: #ccc0da; text-align: left; padding-left: 3px; color: #332b3d; }
.sheet .n { text-align: right; padding-right: 3px; }
.won { display: flex; justify-content: space-between; padding: 0 7px; }
.won i { font-size: 14px; }
.cross { position: absolute; right: -12px; bottom: -2px; z-index: 2; }
.sheet .picked { font-weight: 600; background: linear-gradient(90deg, #ff0 79px, #c5c500 79px); border: 1px solid #217346; padding: 0 3px; box-shadow: inset 0 0 0 1px #8fb830; }
.picked::after { content: ""; position: absolute; right: -3px; bottom: -2px; width: 4px; height: 4px; background: #217346; }
.sheet .y { background: #ff0; }
.sheet .r { text-align: right; }
.sheet .in { padding-left: 8px; }
.split { display: flex; justify-content: space-between; }
.split span { font-size: 12px; }
.sheet .result { border: 2px solid #111; border-width: 2px 0; font: 12px/16px "Liberation Sans", sans-serif; }
.vscroll { width: 18px; padding: 2px 2px 2px 1px; display: flex; flex-direction: column; background: linear-gradient(#dadadc, #dadadc) 1px 0 / 15px 100% no-repeat; }
.arrow { flex: none; width: 14px; height: 14px; background: #fff; border: 1px solid #bbb; display: flex; align-items: center; justify-content: center; }
.vthumb { height: 113px; width: 14px; background: #fff; border: 1px solid #bbb; }
.vscroll .end { margin-top: auto; }
.sheetbar { height: 17px; flex: none; display: flex; border-top: 1px solid #bbb; font-size: 13px; line-height: 15px; overflow: hidden; color: #555; }
.navs { width: 76px; padding: 6px 0 0 18px; border-right: 1px solid #aaa; }
.stab { padding: 0 6px; width: 104px; white-space: nowrap; }
.stab.on { background: #fff; color: #2b8256; width: 113px; border-right: 1px solid #aaa; }
.add { margin: 2px auto 0 24px; }
.sheetbar .dots { margin: 4px 12px 0 0; }
.hscroll { flex: none; width: 542px; margin: 3px 21px 0 0; height: 16px; display: flex; background: #dadadc; }
.hthumb { width: 484px; height: 16px; background: #fff; border: 1px solid #bbb; }
.hscroll .end { margin-left: auto; }

/* meeting controls */
.toolbar { height: 52px; flex: none; background: #1a1a1a; color: #a9a9a9; display: flex; padding-left: 8px; font-size: 13px; position: relative; }
.tb { position: relative; display: flex; flex-direction: column; align-items: center; justify-content: flex-end; gap: 3px; padding-bottom: 6px; white-space: nowrap; width: 70px; line-height: 16px; }
.more { width: 12px; height: 34px; display: flex; align-items: center; justify-content: center; color: #aaa; margin-left: -8px; }
.vid { margin-left: 20px; }
.vid + .more { margin-left: -4px; }
.mid { position: absolute; left: 50%; margin-left: -121px; height: 52px; display: flex; }
.mid .tb { gap: 4px; }
.mid .more { margin: 0 12px 0 12px; }
.people, .qa { width: 70px; }
.talk { width: 80px; margin-left: 5px; }
.present { width: 80px; margin-left: 8px; color: #23d959; }
.count { position: absolute; left: 51px; top: 6px; }
.badge { position: absolute; left: 43px; top: 2px; width: 16px; height: 15px; border-radius: 4px; background: #fa3c3c; color: #fff; line-height: 15px; }
.leave { margin: 13px 12px 0 auto; width: 61px; height: 27px; border-radius: 7px; background: #b82424; color: #fff; font-weight: 600; line-height: 20px; padding-bottom: 3px; }

/* chat */
.chat { width: 432px; flex: none; display: flex; flex-direction: column; background: #fff; color: #333; }
.chat-head { position: relative; height: 44px; flex: none; text-align: center; padding: 12px 0 0 8px; }
.chat-head h2 { font-size: 14px; line-height: 18px; font-weight: 500; }
.chat-head button { position: absolute; left: 20px; top: 20px; color: #666; }
.log { position: relative; flex: 1; min-height: 0; overflow: hidden; display: flex; flex-direction: column; justify-content: flex-end; padding: 0 48px 3px 20px; font-size: 15px; line-height: 25px; }
.carry { padding-left: 134px; }
.msg { margin-bottom: 12px; white-space: nowrap; }
.meta { display: flex; font-size: 13px; line-height: 18px; color: #747487; }
.meta a { color: #0e71eb; text-decoration: none; }
.who { width: 107px; display: flex; justify-content: space-between; }
.who span { display: flex; overflow: hidden; }
.who span + span { justify-content: flex-end; }
.from { margin-right: 3px; }
.a30 { width: 30px; } .a32 { width: 32px; } .a36 { width: 36px; }
.b25 { width: 25px; } .b28 { width: 28px; } .b30 { width: 30px; } .b34 { width: 34px; } .b36 { width: 36px; }
.track { position: absolute; right: 0; top: 2px; bottom: 0; width: 3px; background: #f1f1f5; border-radius: 3px 0 0 0; }
.track i { position: absolute; bottom: 2px; width: 3px; height: 17px; border-radius: 2px 0 0 2px; background: #b0b0ba; }
.composer { height: 93px; flex: none; border-top: 1px solid #e8e8ee; padding: 11px 8px 0 18px; }
.to { display: flex; align-items: center; height: 24px; font-size: 13px; }
.pill { position: relative; margin-left: 8px; height: 23px; display: flex; align-items: center; background: #f2f2f7; border-radius: 7px; font-size: 12px; font-weight: 500; color: #222; }
.pill select { width: 134px; height: 23px; padding-left: 7px; }
.pill svg { position: absolute; right: 8px; }
.dots3 { margin-left: auto; width: 24px; height: 24px; border: 1px solid #e4e4ed; border-radius: 6px; display: flex; align-items: center; justify-content: center; }
textarea { display: block; width: 100%; height: 46px; resize: none; font-size: 14px; line-height: 18px; margin-top: 4px; }
textarea::placeholder { color: #747487; opacity: 1; }
```
